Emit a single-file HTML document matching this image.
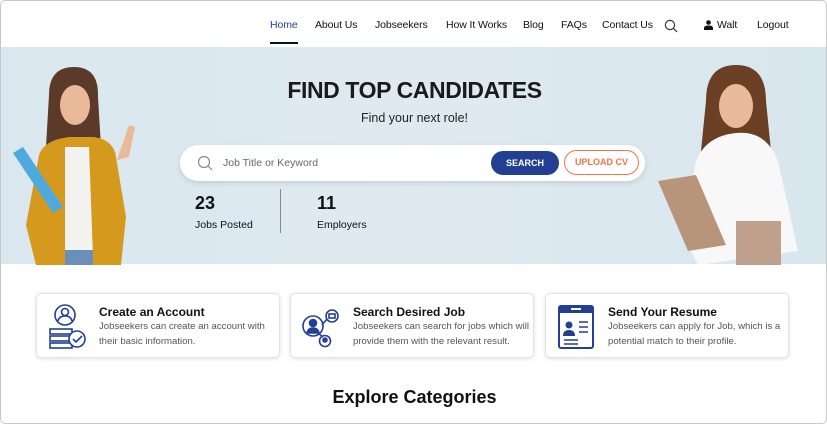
<!DOCTYPE html>
<html><head><style>
*{box-sizing:border-box;margin:0;padding:0}
body{width:827px;height:424px;overflow:hidden;background:#fff;font-family:"Liberation Sans",sans-serif;color:#111}
.frame{position:absolute;left:0;top:0;width:827px;height:424px;border:1px solid #c9c9c9;border-radius:5px;overflow:hidden;background:#fff}
.nav{position:absolute;top:0;left:0;right:0;height:46px}
.nav span{position:absolute;top:18px;font-size:10.5px;color:#111;letter-spacing:-0.1px}
.hero{position:absolute;top:46px;left:0;width:827px;height:217px;background:linear-gradient(90deg,#dae7ef,#dfeaf0 50%,#d8e6ee)}
h1{position:absolute;left:0;width:827px;text-align:center;font-size:23px;font-weight:bold;color:#1a1a1a;letter-spacing:-0.4px}
.sub{position:absolute;width:827px;text-align:center;font-size:12.5px;color:#222}
.search{position:absolute;left:179px;top:144px;width:465px;height:36px;background:#fff;border-radius:18px;box-shadow:0 2px 6px rgba(0,0,0,.12)}
.btn1{position:absolute;left:311px;top:6px;width:68px;height:24px;background:#233f94;border-radius:12px;color:#fff;font-size:9px;font-weight:bold;text-align:center;line-height:24px}
.btn2{position:absolute;left:384px;top:5px;width:75px;height:25px;border:1.5px solid #f0744a;border-radius:13px;color:#f0744a;font-size:9px;font-weight:bold;text-align:center;line-height:22px}
.stat{position:absolute;font-size:18px;font-weight:bold}
.lab{position:absolute;font-size:10.5px;color:#111}
.card{position:absolute;top:292px;width:244px;height:65px;border:1px solid #e3e3e3;border-radius:5px;box-shadow:0 1px 4px rgba(0,0,0,.12);background:#fff}
.card b{position:absolute;left:62px;top:11px;font-size:12px;color:#111}
.card p{position:absolute;left:62px;top:26px;font-size:9.6px;line-height:14.5px;color:#555;white-space:nowrap}
.card svg{position:absolute;left:10px;top:10px}
.ex{position:absolute;top:386px;width:827px;text-align:center;font-size:18px;font-weight:bold}
</style></head><body><div class="frame">
<div class="nav">
<span style="left:269px;color:#233f94">Home</span>
<div style="position:absolute;left:269px;top:41px;width:28px;height:2px;background:#111"></div>
<span style="left:314px">About Us</span>
<span style="left:374px">Jobseekers</span>
<span style="left:445px">How It Works</span>
<span style="left:522px">Blog</span>
<span style="left:560px">FAQs</span>
<span style="left:601px">Contact Us</span>
<svg style="position:absolute;left:663px;top:18px" width="14" height="14" viewBox="0 0 14 14"><circle cx="6" cy="6" r="4.6" fill="none" stroke="#333" stroke-width="1.2"/><path d="M9.3 9.3L13 13" stroke="#333" stroke-width="1.2"/></svg>
<svg style="position:absolute;left:703px;top:19px" width="9" height="10" viewBox="0 0 9 10"><circle cx="4.5" cy="2.5" r="2.3" fill="#111"/><path d="M0 10v-2q0-2.5 4.5-2.5T9 8v2z" fill="#111"/></svg>
<span style="left:716px">Walt</span>
<span style="left:756px">Logout</span>
</div>
<div class="hero">
<svg style="position:absolute;left:8px;top:18px" width="150" height="200" viewBox="0 0 150 200">
<path d="M40 30q0-28 25-28t24 30l3 50-55 0z" fill="#5b3a2a"/>
<ellipse cx="66" cy="40" rx="15" ry="20" fill="#e9b99a"/>
<path d="M30 90q5-15 30-18l25 0q20 3 22 20l10 60-5 48-85 0-10-40z" fill="#d59a1d"/>
<path d="M56 82l24 0 4 110-28 0z" fill="#f2f2f0"/>
<path d="M56 185h28v15h-28z" fill="#6a8fb8"/>
<path d="M108 95l12-35 6 2-6 30z" fill="#e9b99a"/>
<path d="M4 88l10-6 40 60-10 6z" fill="#4fa9dc"/>
</svg>
<svg style="position:absolute;left:655px;top:14px" width="165" height="204" viewBox="0 0 165 204">
<path d="M50 40q0-36 30-36t30 36l6 60-72 0z" fill="#6b3f24"/>
<ellipse cx="80" cy="45" rx="17" ry="22" fill="#e8b99b"/>
<path d="M40 100q10-25 40-28t42 28l20 90-100 14-15-30z" fill="#f8f8f8"/>
<path d="M80 160h45v44h-45z" fill="#bfa08c"/>
<path d="M2 120l38-6 30 70-38 6z" fill="#b8957a"/>
</svg>
<h1 style="top:30px">FIND TOP CANDIDATES</h1>
<div class="sub" style="top:64px">Find your next role!</div>
</div>
<div class="search">
<svg style="position:absolute;left:17px;top:10px" width="16" height="16" viewBox="0 0 16 16"><circle cx="7" cy="7" r="5.5" fill="none" stroke="#888" stroke-width="1.2"/><path d="M11 11l4 4" stroke="#888" stroke-width="1.2"/></svg>
<div style="position:absolute;left:43px;top:12px;font-size:10.5px;color:#666">Job Title or Keyword</div>
<div class="btn1">SEARCH</div><div class="btn2">UPLOAD CV</div>
</div>
<div class="stat" style="left:194px;top:192px">23</div>
<div class="lab" style="left:194px;top:218px">Jobs Posted</div>
<div style="position:absolute;left:279px;top:188px;width:1px;height:44px;background:#888"></div>
<div class="stat" style="left:316px;top:192px">11</div>
<div class="lab" style="left:316px;top:218px">Employers</div>

<div class="card" style="left:35px">
<svg width="44" height="46" viewBox="0 0 44 46" fill="none" stroke="#233f94" stroke-width="1.6"><circle cx="18" cy="11" r="10"/><circle cx="18" cy="8" r="3.5"/><path d="M11 17q1-5 7-5t7 5"/><rect x="3" y="25" width="22" height="5"/><rect x="3" y="32" width="22" height="5"/><rect x="3" y="39" width="22" height="5"/><circle cx="30" cy="35" r="8" fill="#fff"/><path d="M26 35l3 3 6-6"/></svg>
<b>Create an Account</b><p>Jobseekers can create an account with<br>their basic information.</p></div>
<div class="card" style="left:289px">
<svg width="44" height="46" viewBox="0 0 44 46" stroke="#233f94" stroke-width="1.6" fill="none"><circle cx="12" cy="22" r="10"/><circle cx="12" cy="19" r="3.5" fill="#233f94"/><path d="M6 29q1-5 6-5t6 5z" fill="#233f94"/><circle cx="31" cy="12" r="6"/><rect x="28" y="10" width="6" height="4"/><circle cx="24" cy="37" r="5.5"/><circle cx="24" cy="36" r="2" fill="#233f94"/><path d="M21 21l5-6M17 29l5 4"/></svg>
<b>Search Desired Job</b><p>Jobseekers can search for jobs which will<br>provide them with the relevant result.</p></div>
<div class="card" style="left:544px">
<svg width="40" height="46" viewBox="0 0 40 46"><rect x="3" y="2" width="34" height="42" rx="2" fill="none" stroke="#233f94" stroke-width="2"/><rect x="3" y="2" width="34" height="7" fill="#233f94"/><rect x="15" y="4" width="10" height="2" fill="#fff"/><circle cx="13" cy="21" r="3.5" fill="#233f94"/><path d="M7 32q0-6 6-6t6 6z" fill="#233f94"/><path d="M23 18h9M23 23h9M23 28h9M8 36h14M8 40h14" stroke="#233f94" stroke-width="1.6"/></svg>
<b>Send Your Resume</b><p>Jobseekers can apply for Job, which is a<br>potential match to their profile.</p></div>
<div class="ex">Explore Categories</div>
</div></body></html>
